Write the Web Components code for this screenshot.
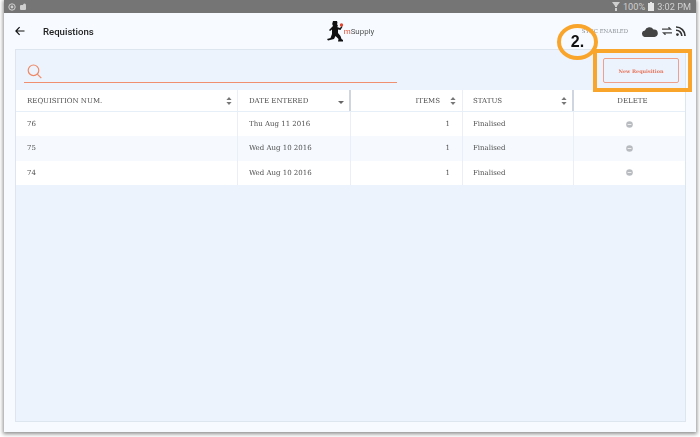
<!DOCTYPE html>
<html>
<head>
<meta charset="utf-8">
<style>
html, body { margin: 0; height: 437px; overflow: hidden; background: #fff; }
</style>
</head>
<body>
<tablet-frame>
  <status-bar></status-bar>
  <app-header></app-header>
  <req-panel>
    <search-row></search-row>
    <req-table>
      <req-row num="76" date="Thu Aug 11 2016" items="1" status="Finalised"></req-row>
      <req-row num="75" date="Wed Aug 10 2016" items="1" status="Finalised" alt></req-row>
      <req-row num="74" date="Wed Aug 10 2016" items="1" status="Finalised"></req-row>
    </req-table>
  </req-panel>
</tablet-frame>
<step-callout></step-callout>

<script>
class TabletFrame extends HTMLElement {
    constructor() {
        super();
        this.attachShadow({ mode: 'open' });
        this.shadowRoot.innerHTML = `
            <style>
                :host {
                    display: flex;
                    flex-direction: column;
                    box-sizing: border-box;
                    width: 692px;
                    height: 432px;
                    margin-left: 4px;
                    background: #f7fbff;
                    box-shadow: 0 1px 4px 1px rgba(0,0,0,.45);
                    opacity: .999;
                }
            </style>
            <slot></slot>
        `;
    }
}

class StatusBar extends HTMLElement {
    constructor() {
        super();
        this.attachShadow({ mode: 'open' });
        this.shadowRoot.innerHTML = `
            <style>
                :host {
                    display: flex;
                    align-items: center;
                    height: 13px;
                    flex: none;
                    padding: 0 5px 0 4px;
                    background: #757575;
                    color: #d0d0d0;
                    font: 9.2px Roboto, sans-serif;
                }
                .left { display: flex; gap: 3px; flex: 1; }
                .right { display: flex; align-items: center; gap: 3px; }
                svg { display: block; }
            </style>
            <div class="left">
                <svg width="8" height="8" viewBox="0 0 8 8"><circle cx="4" cy="4" r="3.2" fill="none" stroke="#cfcfcf"/><circle cx="4" cy="4" r="1.4" fill="#cfcfcf"/></svg>
                <svg width="8" height="8" viewBox="0 0 8 8"><rect x="1" y="2" width="6" height="5" rx="1" fill="#cfcfcf"/><circle cx="5.5" cy="2" r="1.5" fill="#cfcfcf"/></svg>
            </div>
            <div class="right">
                <svg width="8" height="9" viewBox="0 0 8 9"><path d="M0 0h8L5 4v1H3V4z" fill="#cfcfcf"/><rect x="3" y="6" width="2" height="3" fill="#cfcfcf"/></svg>
                <span>100%</span>
                <svg width="6" height="9" viewBox="0 0 6 9"><path d="M2 0h2v1h2v8H0V1h2z" fill="#e6e6e6"/></svg>
                <span>3:02 PM</span>
            </div>
        `;
    }
}

class AppHeader extends HTMLElement {
    constructor() {
        super();
        this.attachShadow({ mode: 'open' });
        this.shadowRoot.innerHTML = `
            <style>
                :host {
                    display: grid;
                    grid-template-columns: 1fr auto 1fr;
                    align-items: center;
                    height: 36px;
                    flex: none;
                    padding: 0 11px;
                    box-sizing: border-box;
                }
                .left { display: flex; align-items: center; gap: 18px; }
                h1 { margin: 0; font: 500 9.6px Roboto, sans-serif; color: #222; }
                .logo { display: flex; align-items: center; font: 7.9px Roboto, sans-serif; color: #555; margin-left: 1px; }
                .logo b { font-weight: 400; color: #d9543a; }
                .right { display: flex; align-items: center; justify-content: flex-end; gap: 4px; margin-right: -1px; }
                .sync { font: 5.4px "DejaVu Serif", serif; color: #8a8f96; margin-right: 10px; }
                svg { display: block; }
            </style>
            <div class="left">
                <svg width="10" height="10" viewBox="0 0 10 10"><path d="M9.5 5H1.2M4.6 1.2L.9 5l3.7 3.8" fill="none" stroke="#111" stroke-width="1.2"/></svg>
                <h1>Requistions</h1>
            </div>
            <div class="logo">
                <svg width="17" height="22" viewBox="0 0 17 22">
                    <path d="M6 1h4l.5 2-.5 1 1 2-1 1 3 1 1.5-2 1 .8-2 3.2-2.5-.5V13l2.500 3 1 3 1.500 1v1.500H11l.5-2.500-3-3-1.500 3-6 1.500L0 19l3.500-1 1.500-4V9.500L3 11l-1-1 3-3 1-1-.8-2z" fill="#111"/>
                    <circle cx="14.5" cy="5" r="1.7" fill="#e2452f"/>
                </svg>
                <span><b>m</b>Supply</span>
            </div>
            <div class="right">
                <span class="sync">SYNC ENABLED</span>
                <svg width="16" height="11" viewBox="0 0 16 11"><path d="M3.5 11a3.2 3.2 0 0 1-.6-6.400A4.800 4.800 0 0 1 11.500 3.500 3.700 3.700 0 0 1 12.500 11z" fill="#444"/></svg>
                <svg width="10" height="8" viewBox="0 0 10 8"><path d="M0 2.200h8M6.500.2l2 2-2 0M10 5.800H2M3.500 7.800l-2-2 2 0" fill="none" stroke="#444" stroke-width="1.300"/></svg>
                <svg width="10" height="10" viewBox="0 0 9 9"><circle cx="1.300" cy="7.700" r="1.200" fill="#333"/><path d="M0 3.800A5 5 0 0 1 5.200 9M0 .9A8 8 0 0 1 8.100 9" fill="none" stroke="#333" stroke-width="1.500"/></svg>
            </div>
        `;
    }
}

class ReqPanel extends HTMLElement {
    constructor() {
        super();
        this.attachShadow({ mode: 'open' });
        this.shadowRoot.innerHTML = `
            <style>
                :host {
                    display: flex;
                    flex-direction: column;
                    box-sizing: border-box;
                    height: 373px;
                    margin: 0 10px 0 11px;
                    background: #ecf3fc;
                    border: 1px solid #dde5ee;
                }
            </style>
            <slot></slot>
        `;
    }
}

class SearchRow extends HTMLElement {
    constructor() {
        super();
        this.attachShadow({ mode: 'open' });
        this.shadowRoot.innerHTML = `
            <style>
                :host {
                    display: flex;
                    justify-content: space-between;
                    align-items: flex-start;
                    height: 40px;
                    flex: none;
                    padding: 8px 6px 0 8px;
                    box-sizing: border-box;
                }
                .search {
                    width: 373px;
                    height: 25px;
                    box-sizing: border-box;
                    padding: 6px 0 0 3px;
                    border-bottom: 1px solid #ef8f6f;
                }
                .btn {
                    width: 76px;
                    height: 25px;
                    box-sizing: border-box;
                    display: flex;
                    align-items: center;
                    justify-content: center;
                    border: 1px solid #eea08c;
                    border-radius: 2px;
                    color: #e8735a;
                    font: 700 4.9px "DejaVu Serif", serif;
                }
                svg { display: block; }
            </style>
            <div class="search">
                <svg width="15" height="15" viewBox="0 0 15 15"><circle cx="6.5" cy="6.3" r="5.3" fill="none" stroke="#ee8a68" stroke-width="1.2"/><path d="M10.3 10.2l4 4" stroke="#ee8a68" stroke-width="1.2"/></svg>
            </div>
            <div class="btn">New Requisition</div>
        `;
    }
}

const sortIcon = `<svg width="6" height="8" viewBox="0 0 6 8"><path d="M3 0l2.6 3H.4zM3 8L.4 5h5.2z" fill="#777"/></svg>`;
const columns = '222px 113px 112px 111px 111px';

class ReqTable extends HTMLElement {
    constructor() {
        super();
        this.attachShadow({ mode: 'open' });
        this.shadowRoot.innerHTML = `
            <style>
                :host { display: block; font: 7px "DejaVu Serif", serif; color: #4f4f4f; }
                .head {
                    display: grid;
                    grid-template-columns: ${columns};
                    height: 22px;
                    background: #fff;
                    border-bottom: 1px solid #e6eef8;
                    box-sizing: border-box;
                }
                .head div {
                    display: flex;
                    align-items: center;
                    justify-content: space-between;
                    padding: 0 5px 0 11px;
                    border-right: 1px solid #e8eff8;
                    box-sizing: border-box;
                }
                .head .thick { border-right: 2px solid #cfd6df; }
                .head .num { justify-content: flex-end; gap: 10px; padding-right: 6px; }
                .head .status { padding-left: 10px; }
                .head .mid { justify-content: center; border: 0; }
                .caret { margin-top: 4px; }
                svg { display: block; flex: none; }
            </style>
            <div class="head">
                <div>REQUISITION NUM. ${sortIcon}</div>
                <div class="thick">DATE ENTERED <svg class="caret" width="6" height="3" viewBox="0 0 6 3"><path d="M0 0h6L3 3z" fill="#666"/></svg></div>
                <div class="num">ITEMS ${sortIcon}</div>
                <div class="thick status">STATUS ${sortIcon}</div>
                <div class="mid">DELETE</div>
            </div>
            <slot></slot>
        `;
    }
}

class ReqRow extends HTMLElement {
    constructor() {
        super();
        this.attachShadow({ mode: 'open' });
        const a = n => this.getAttribute(n);
        this.shadowRoot.innerHTML = `
            <style>
                :host {
                    display: grid;
                    grid-template-columns: ${columns};
                    height: 24.3px;
                    align-items: center;
                    background: ${this.hasAttribute('alt') ? '#f6fafe' : '#fff'};
                }
                div {
                    height: 100%;
                    display: flex;
                    align-items: center;
                    padding: 0 11px;
                    box-sizing: border-box;
                    border-right: 1px solid #e8eff8;
                }
                .items { justify-content: flex-end; padding-right: 12px; }
                .status { padding-left: 10px; }
                .del { justify-content: center; border: 0; padding: 0; }
                svg { display: block; }
            </style>
            <div>${a('num')}</div>
            <div>${a('date')}</div>
            <div class="items">${a('items')}</div>
            <div class="status">${a('status')}</div>
            <div class="del"><svg width="7" height="7" viewBox="0 0 7 7"><circle cx="3.5" cy="3.5" r="3.3" fill="#b8bcc0"/><rect x="1.6" y="3" width="3.8" height="1" fill="#eee"/></svg></div>
        `;
    }
}

class StepCallout extends HTMLElement {
    constructor() {
        super();
        this.attachShadow({ mode: 'open' });
        this.shadowRoot.innerHTML = `
            <style>
                :host { display: block; }
                .box {
                    position: absolute;
                    left: 593px;
                    top: 49px;
                    width: 99px;
                    height: 43px;
                    box-sizing: border-box;
                    border: 4px solid #f9a42a;
                }
                .circle {
                    position: absolute;
                    left: 557px;
                    top: 24px;
                    width: 41px;
                    height: 36px;
                    box-sizing: border-box;
                    border: 4px solid #f9a42a;
                    border-radius: 50%;
                    display: flex;
                    align-items: center;
                    justify-content: center;
                    color: #111;
                    font: 700 16px "Liberation Sans", sans-serif;
                }
            </style>
            <div class="box"></div>
            <div class="circle">2.</div>
        `;
    }
}

customElements.define('tablet-frame', TabletFrame);
customElements.define('status-bar', StatusBar);
customElements.define('app-header', AppHeader);
customElements.define('req-panel', ReqPanel);
customElements.define('search-row', SearchRow);
customElements.define('req-table', ReqTable);
customElements.define('req-row', ReqRow);
customElements.define('step-callout', StepCallout);
</script>
</body>
</html>
